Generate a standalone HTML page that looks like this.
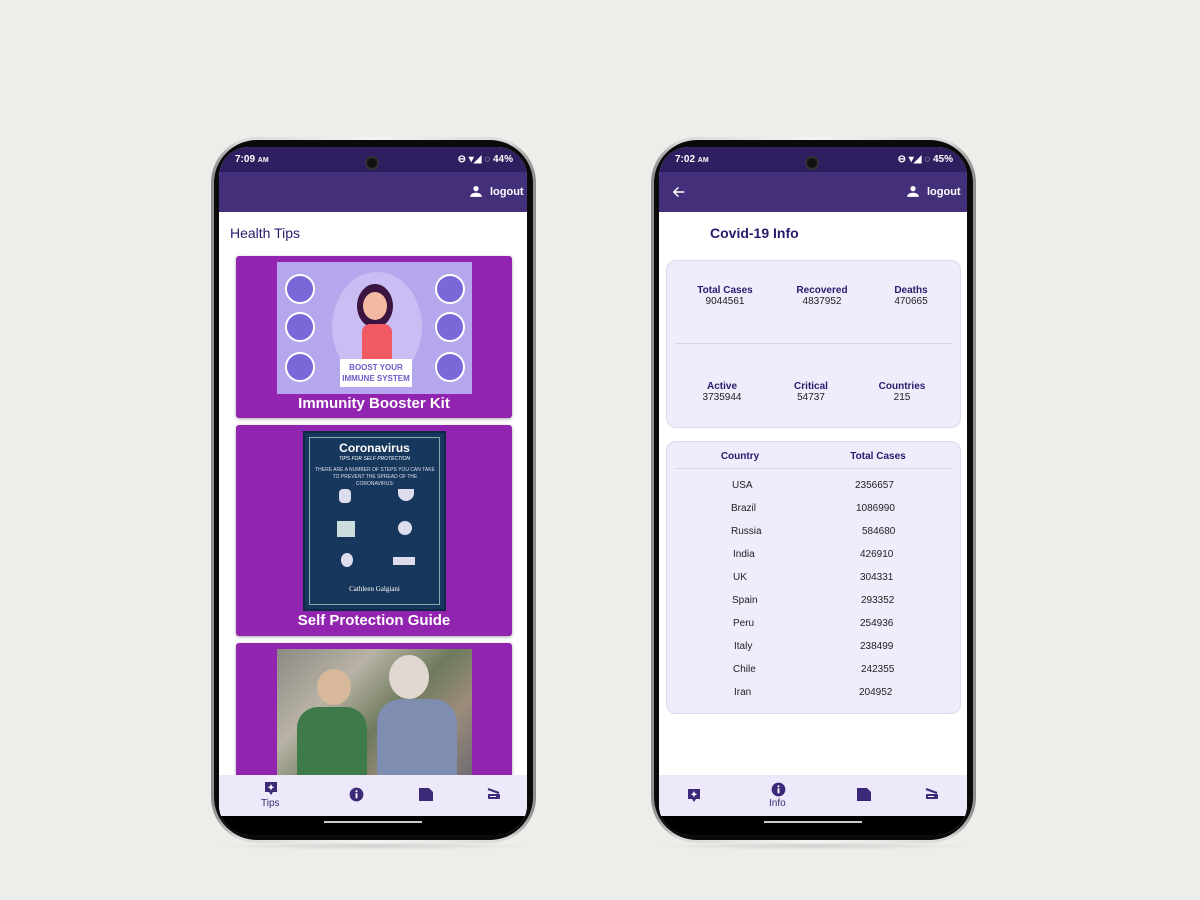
<!DOCTYPE html>
<html><head><meta charset="utf-8"><style>
*{margin:0;padding:0;box-sizing:border-box}
body{width:1200px;height:900px;background:#ebeee9;position:relative;overflow:hidden;font-family:"Liberation Sans",Roboto,sans-serif}
.abs{position:absolute}
.phone{position:absolute;top:137px;width:325px;height:706px;border-radius:46px;background:linear-gradient(90deg,#8a8a8a,#d9d9d9 8%,#f4f4f4 50%,#d9d9d9 92%,#8a8a8a);padding:3px}
.phone .in{width:100%;height:100%;border-radius:43px;background:#0a0a0a;position:relative}
.shadow{position:absolute;top:842px;width:325px;height:8px;background:radial-gradient(ellipse at center,rgba(0,0,0,.12),rgba(0,0,0,0) 70%)}
.screen{position:absolute;left:5px;top:7px;width:308px;height:688px;border-radius:30px;overflow:hidden;background:#fff}
.sb{position:absolute;left:0;top:0;width:100%;height:25px;background:#2f1f60;color:#fff;font-size:10px;font-weight:bold}
.ab{position:absolute;left:0;top:25px;width:100%;height:40px;background:#44307a;color:#fff;font-size:11px;font-weight:bold}
.nav{position:absolute;left:0;top:628px;width:100%;height:41px;background:#ede9fa}
.blk{position:absolute;left:0;top:669px;width:100%;height:19px;background:#000}
.blk div{position:absolute;left:105px;top:5px;width:98px;height:2px;background:#ccc}
.cam{position:absolute;top:16px;left:151px;width:14px;height:14px;border-radius:50%;background:#111;border:2px solid #333}
.card{position:absolute;left:17px;width:276px;background:#9125b0;border-radius:3px;box-shadow:0 1px 3px rgba(0,0,0,.35)}
.ct{position:absolute;width:100%;text-align:center;color:#fff;font-weight:bold;font-size:15px}
.box{position:absolute;left:7px;width:295px;background:#efecfb;border:1px solid #dcd8ee;border-radius:10px}
.lab{position:absolute;text-align:center;font-size:10px;color:#2b1a6b;font-weight:bold;width:80px}
.val{position:absolute;text-align:center;font-size:10px;color:#222;width:80px}
.row{position:absolute;font-size:10px;color:#222}
</style></head><body>

<!-- LEFT PHONE -->
<div class="shadow" style="left:211px"></div>
<div class="phone" style="left:211px"><div class="in">
<div class="screen">
 <div class="sb"><span class="abs" style="left:16px;top:7px">7:09 <span style="font-size:7px">AM</span></span>
  <span class="abs" style="right:14px;top:7px">⊖ ▾◢ ◌ 44%</span></div>
 <div class="ab">
  <svg class="abs" style="left:250px;top:12px" width="14" height="14" viewBox="0 0 24 24"><circle cx="12" cy="8" r="4.5" fill="#fff"/><path d="M2 22c0-5 5-7 10-7s10 2 10 7z" fill="#fff"/></svg>
  <span class="abs" style="left:271px;top:14px">logout</span></div>
 <div class="abs" style="left:11px;top:78px;font-size:14px;color:#2b1a6b">Health Tips</div>

 <div class="card" style="top:109px;height:162px">
  <div class="abs" style="left:41px;top:6px;width:195px;height:132px;background:#b6a6ee;overflow:hidden">
   <div class="abs" style="left:55px;top:10px;width:90px;height:110px;border-radius:50%;background:#c9bdf4"></div>
   <div class="abs" style="left:8px;top:12px;width:30px;height:30px;border-radius:50%;background:#7a68d8;border:2px solid #fff"></div>
   <div class="abs" style="left:8px;top:50px;width:30px;height:30px;border-radius:50%;background:#7a68d8;border:2px solid #fff"></div>
   <div class="abs" style="left:8px;top:90px;width:30px;height:30px;border-radius:50%;background:#7a68d8;border:2px solid #fff"></div>
   <div class="abs" style="left:158px;top:12px;width:30px;height:30px;border-radius:50%;background:#7a68d8;border:2px solid #fff"></div>
   <div class="abs" style="left:158px;top:50px;width:30px;height:30px;border-radius:50%;background:#7a68d8;border:2px solid #fff"></div>
   <div class="abs" style="left:158px;top:90px;width:30px;height:30px;border-radius:50%;background:#7a68d8;border:2px solid #fff"></div>
   <div class="abs" style="left:80px;top:22px;width:36px;height:44px;border-radius:50%;background:#3b1540"></div>
   <div class="abs" style="left:86px;top:30px;width:24px;height:28px;border-radius:50%;background:#f4b9a3"></div>
   <div class="abs" style="left:85px;top:62px;width:30px;height:40px;border-radius:8px 8px 0 0;background:#f05b63"></div>
   <div class="abs" style="left:63px;top:97px;width:72px;height:28px;background:#fff;color:#6e5bc8;font-size:8px;font-weight:bold;text-align:center;line-height:11px;padding-top:3px">BOOST YOUR<br>IMMUNE SYSTEM</div>
  </div>
  <div class="ct" style="top:139px">Immunity Booster Kit</div>
 </div>

 <div class="card" style="top:278px;height:211px">
  <div class="abs" style="left:67px;top:6px;width:143px;height:180px;background:#18375c;border:2px solid #0f2848">
   <div class="abs" style="left:4px;top:4px;right:4px;bottom:4px;border:1px solid #8aa"></div>
   <div class="abs" style="left:0;top:8px;width:100%;text-align:center;color:#fff;font-weight:bold;font-size:12px">Coronavirus</div>
   <div class="abs" style="left:0;top:23px;width:100%;text-align:center;color:#fff;font-size:5px;font-style:italic">TIPS FOR SELF PROTECTION</div>
   <div class="abs" style="left:10px;top:34px;width:120px;text-align:center;color:#dde;font-size:5px;line-height:7px">THERE ARE A NUMBER OF STEPS YOU CAN TAKE TO PREVENT THE SPREAD OF THE CORONAVIRUS:</div>
   <div class="abs" style="left:34px;top:56px;width:12px;height:14px;background:#dde;border-radius:4px"></div>
   <div class="abs" style="left:93px;top:56px;width:16px;height:12px;background:#dde;border-radius:0 0 8px 8px"></div>
   <div class="abs" style="left:32px;top:88px;width:18px;height:16px;background:#cdd"></div>
   <div class="abs" style="left:93px;top:88px;width:14px;height:14px;background:#dde;border-radius:50%"></div>
   <div class="abs" style="left:36px;top:120px;width:12px;height:14px;background:#dde;border-radius:50%"></div>
   <div class="abs" style="left:88px;top:124px;width:22px;height:8px;background:#dde"></div>
   <div class="abs" style="left:0;top:152px;width:100%;text-align:center;color:#fff;font-size:7px;font-family:'Liberation Serif',serif">Cathleen Galgiani</div>
  </div>
  <div class="ct" style="top:187px">Self Protection Guide</div>
 </div>

 <div class="card" style="top:496px;height:150px">
  <div class="abs" style="left:41px;top:6px;width:195px;height:130px;background:linear-gradient(135deg,#8c8a84 0%,#b9b3a6 30%,#6e7a5c 55%,#9c8c7c 75%,#6d6a70 100%);overflow:hidden">
   <div class="abs" style="left:40px;top:20px;width:34px;height:36px;border-radius:50%;background:#d8b89a"></div>
   <div class="abs" style="left:112px;top:6px;width:40px;height:44px;border-radius:50%;background:#e0d8d0"></div>
   <div class="abs" style="left:20px;top:58px;width:70px;height:70px;border-radius:30% 30% 0 0;background:#3f7b4a"></div>
   <div class="abs" style="left:100px;top:50px;width:80px;height:80px;border-radius:30% 30% 0 0;background:#7f8eb0"></div>
  </div>
 </div>

 <div class="nav">
  <svg class="abs" style="left:45px;top:6px" width="14" height="15" viewBox="0 0 14 15"><path d="M1 1h12v10H9l-2 3-2-3H1z" fill="#3a2a78"/><path d="M7 3l1 2.2 2.2 1-2.2 1L7 9.4 6 7.2l-2.2-1 2.2-1z" fill="#fff"/></svg>
  <div class="abs" style="left:42px;top:23px;font-size:10px;color:#3a2a78">Tips</div>
  <svg class="abs" style="left:130px;top:12px" width="15" height="15" viewBox="0 0 24 24"><circle cx="12" cy="12" r="11" fill="#3a2a78"/><rect x="10.5" y="10" width="3" height="8" fill="#fff"/><circle cx="12" cy="6.8" r="1.7" fill="#fff"/></svg>
  <svg class="abs" style="left:200px;top:13px" width="14" height="13" viewBox="0 0 14 13"><path d="M0 0h10l4 4v9H0z" fill="#3a2a78"/></svg>
  <svg class="abs" style="left:268px;top:13px" width="14" height="12" viewBox="0 0 14 12"><path d="M1 1l11 4" stroke="#3a2a78" stroke-width="2"/><rect x="1" y="6" width="12" height="5" rx="1" fill="#3a2a78"/><rect x="3" y="8" width="6" height="1" fill="#fff"/></svg>
 </div>
 <div class="blk"><div></div></div>
</div>
<div class="cam"></div>
</div></div>

<!-- RIGHT PHONE -->
<div class="shadow" style="left:651px"></div>
<div class="phone" style="left:651px"><div class="in">
<div class="screen">
 <div class="sb"><span class="abs" style="left:16px;top:7px">7:02 <span style="font-size:7px">AM</span></span>
  <span class="abs" style="right:14px;top:7px">⊖ ▾◢ ◌ 45%</span></div>
 <div class="ab">
  <svg class="abs" style="left:13px;top:13px" width="14" height="14" viewBox="0 0 24 24"><path d="M21 12H4M11 4l-8 8 8 8" stroke="#fff" stroke-width="2.4" fill="none"/></svg>
  <svg class="abs" style="left:247px;top:12px" width="14" height="14" viewBox="0 0 24 24"><circle cx="12" cy="8" r="4.5" fill="#fff"/><path d="M2 22c0-5 5-7 10-7s10 2 10 7z" fill="#fff"/></svg>
  <span class="abs" style="left:268px;top:14px">logout</span></div>
 <div class="abs" style="left:51px;top:78px;font-size:14px;color:#2b1a6b;font-weight:bold">Covid-19 Info</div>

 <div class="box" style="top:113px;height:168px">
  <div class="lab" style="left:18px;top:24px">Total Cases</div><div class="val" style="left:18px;top:35px">9044561</div>
  <div class="lab" style="left:115px;top:24px">Recovered</div><div class="val" style="left:115px;top:35px">4837952</div>
  <div class="lab" style="left:204px;top:24px">Deaths</div><div class="val" style="left:204px;top:35px">470665</div>
  <div class="abs" style="left:8px;right:8px;top:82px;height:1px;background:#d6d2ea"></div>
  <div class="lab" style="left:15px;top:120px">Active</div><div class="val" style="left:15px;top:131px">3735944</div>
  <div class="lab" style="left:104px;top:120px">Critical</div><div class="val" style="left:104px;top:131px">54737</div>
  <div class="lab" style="left:195px;top:120px">Countries</div><div class="val" style="left:195px;top:131px">215</div>
 </div>

 <div class="box" style="top:294px;height:273px">
  <div class="lab" style="left:33px;top:9px">Country</div>
  <div class="lab" style="left:171px;top:9px">Total Cases</div>
  <div class="abs" style="left:8px;right:8px;top:26px;height:1px;background:#d6d2ea"></div>
  <div class="row" style="left:65px;top:38px">USA</div><div class="row" style="left:188px;top:38px">2356657</div>
  <div class="row" style="left:64px;top:61px">Brazil</div><div class="row" style="left:189px;top:61px">1086990</div>
  <div class="row" style="left:64px;top:84px">Russia</div><div class="row" style="left:195px;top:84px">584680</div>
  <div class="row" style="left:66px;top:107px">India</div><div class="row" style="left:193px;top:107px">426910</div>
  <div class="row" style="left:66px;top:130px">UK</div><div class="row" style="left:193px;top:130px">304331</div>
  <div class="row" style="left:65px;top:153px">Spain</div><div class="row" style="left:194px;top:153px">293352</div>
  <div class="row" style="left:66px;top:176px">Peru</div><div class="row" style="left:193px;top:176px">254936</div>
  <div class="row" style="left:67px;top:199px">Italy</div><div class="row" style="left:193px;top:199px">238499</div>
  <div class="row" style="left:66px;top:222px">Chile</div><div class="row" style="left:194px;top:222px">242355</div>
  <div class="row" style="left:67px;top:245px">Iran</div><div class="row" style="left:192px;top:245px">204952</div>
 </div>

 <div class="nav">
  <svg class="abs" style="left:28px;top:13px" width="14" height="15" viewBox="0 0 14 15"><path d="M1 1h12v10H9l-2 3-2-3H1z" fill="#3a2a78"/><path d="M7 3l1 2.2 2.2 1-2.2 1L7 9.4 6 7.2l-2.2-1 2.2-1z" fill="#fff"/></svg>
  <svg class="abs" style="left:112px;top:7px" width="15" height="15" viewBox="0 0 24 24"><circle cx="12" cy="12" r="11" fill="#3a2a78"/><rect x="10.5" y="10" width="3" height="8" fill="#fff"/><circle cx="12" cy="6.8" r="1.7" fill="#fff"/></svg>
  <div class="abs" style="left:110px;top:23px;font-size:10px;color:#3a2a78">Info</div>
  <svg class="abs" style="left:198px;top:13px" width="14" height="13" viewBox="0 0 14 13"><path d="M0 0h10l4 4v9H0z" fill="#3a2a78"/></svg>
  <svg class="abs" style="left:266px;top:13px" width="14" height="12" viewBox="0 0 14 12"><path d="M1 1l11 4" stroke="#3a2a78" stroke-width="2"/><rect x="1" y="6" width="12" height="5" rx="1" fill="#3a2a78"/><rect x="3" y="8" width="6" height="1" fill="#fff"/></svg>
 </div>
 <div class="blk"><div></div></div>
</div>
<div class="cam"></div>
</div></div>

</body></html>
